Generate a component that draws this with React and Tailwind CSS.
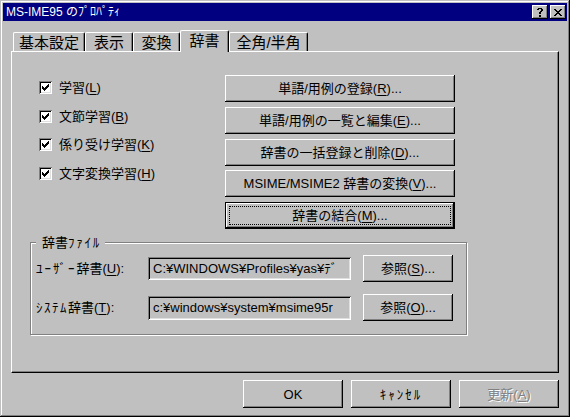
import React from "react";

const RAISED =
  "shadow-[inset_-1px_-1px_#000,inset_1px_1px_#fff,inset_-2px_-2px_#808080]";
const SUNKEN =
  "shadow-[inset_1px_1px_#808080,inset_-1px_-1px_#fff,inset_2px_2px_#000,inset_-2px_-2px_#dfdfdf]";

function U({ children }) {
  return <span className="underline underline-offset-[2px]">{children}</span>;
}

function Check() {
  return (
    <div className={`w-[13px] h-[13px] bg-white flex items-center justify-center shrink-0 ${SUNKEN}`}>
      <svg width="7" height="7" viewBox="0 0 7 7" shapeRendering="crispEdges">
        {[2, 3, 4, 3, 2, 1, 0].map((y, x) => (
          <rect key={x} x={x} y={y} width="1" height="3" fill="#000" />
        ))}
      </svg>
    </div>
  );
}

function CloseGlyph() {
  const rows = [
    [0, 1, 6, 7],
    [1, 2, 5, 6],
    [2, 3, 4, 5],
    [3, 4],
    [2, 3, 4, 5],
    [1, 2, 5, 6],
    [0, 1, 6, 7],
  ];
  return (
    <svg width="8" height="7" viewBox="0 0 8 7" shapeRendering="crispEdges">
      {rows.map((r, y) =>
        r.map((x) => <rect key={`${x}-${y}`} x={x} y={y} width="1" height="1" fill="#000" />)
      )}
    </svg>
  );
}

function HelpGlyph() {
  const rows = [
    [1, 2, 3, 4],
    [0, 1, 4, 5],
    [4, 5],
    [3, 4],
    [2, 3],
    [2, 3],
    [],
    [2, 3],
    [2, 3],
  ];
  return (
    <svg width="6" height="9" viewBox="0 0 6 9" shapeRendering="crispEdges">
      {rows.map((r, y) =>
        r.map((x) => <rect key={`${x}-${y}`} x={x} y={y} width="1" height="1" fill="#000" />)
      )}
    </svg>
  );
}

function TitleButton({ children }) {
  return (
    <div className={`w-[16px] h-[14px] bg-[#c0c0c0] flex items-center justify-center ${RAISED}`}>
      {children}
    </div>
  );
}

function Tab({ label, w, selected }) {
  if (selected) {
    return (
      <div
        className={`relative z-10 -mb-[1px] h-[22px] ${w} bg-[#c0c0c0] border-t border-l border-white border-r border-r-black rounded-tl-[2px] rounded-tr-[2px] shadow-[inset_-1px_0_#808080] flex items-start justify-center pt-[1px] text-[15px] leading-[17px]`}
      >
        {label}
      </div>
    );
  }
  return (
    <div
      className={`h-[19px] ${w} bg-[#c0c0c0] border-t border-l border-white border-r border-r-black rounded-tl-[2px] rounded-tr-[2px] shadow-[inset_-1px_0_#808080] flex items-start justify-center pt-[1px] text-[15px] leading-[17px]`}
    >
      {label}
    </div>
  );
}

function CheckRow({ children }) {
  return (
    <div className="flex items-center h-[13px] gap-[7px] text-[13px] leading-[15px] whitespace-nowrap">
      <Check />
      <span>{children}</span>
    </div>
  );
}

function Btn({ children, className = "" }) {
  return (
    <div
      className={`bg-[#c0c0c0] flex items-center justify-center text-[13px] leading-[15px] whitespace-nowrap ${RAISED} ${className}`}
    >
      {children}
    </div>
  );
}

function FocusBtn({ children }) {
  return (
    <div className="relative h-[27px] bg-[#c0c0c0] flex items-center justify-center text-[13px] leading-[15px] whitespace-nowrap shadow-[inset_-1px_-1px_#000,inset_1px_1px_#000,inset_-2px_-2px_#000,inset_2px_2px_#fff,inset_-3px_-3px_#808080]">
      <div className="absolute inset-[4px] border border-dotted border-black" />
      {children}
    </div>
  );
}

function FileRow({ label, value, btn, inputH }) {
  return (
    <div className="flex items-center h-[27px]">
      <div className="w-[112px] text-[13px] leading-[15px] whitespace-nowrap">{label}</div>
      <div
        className={`w-[203px] ${inputH} bg-[#c0c0c0] flex items-center px-[5px] overflow-hidden whitespace-nowrap text-[13px] leading-[15px] ${SUNKEN}`}
      >
        {value}
      </div>
      <Btn className="ml-[12px] w-[90px] h-[27px]">{btn}</Btn>
    </div>
  );
}

export default function App() {
  return (
    <div className="w-[570px] h-[417px] bg-[#c0c0c0] p-[3px] flex flex-col text-black font-['Liberation_Sans','Noto_Sans_CJK_JP',sans-serif] shadow-[inset_-1px_-1px_#000,inset_1px_1px_#c0c0c0,inset_-2px_-2px_#808080,inset_2px_2px_#fff]">
      {/* Title bar */}
      <div className="h-[18px] bg-[#000080] flex items-center pl-[3px] pr-[1px]">
        <div className="flex-1 text-white text-[12px] leading-[14px] whitespace-nowrap">
          MS-IME95 のﾌﾟﾛﾊﾟﾃｨ
        </div>
        <div className="flex gap-[2px]">
          <TitleButton>
            <HelpGlyph />
          </TitleButton>
          <TitleButton>
            <CloseGlyph />
          </TitleButton>
        </div>
      </div>

      {/* Tabs */}
      <div className="ml-[10px] mt-[9px] h-[21px] flex items-end">
        <Tab label="基本設定" w="w-[72px]" />
        <Tab label="表示" w="w-[48px]" />
        <Tab label="変換" w="w-[47px]" />
        <Tab label="辞書" w="w-[49px]" selected />
        <Tab label="全角/半角" w="w-[79px]" />
      </div>

      {/* Panel */}
      <div className="ml-[8px] w-[548px] h-[322px] border-t border-l border-white border-r border-b border-r-black border-b-black shadow-[inset_-1px_-1px_#808080] pt-[23px] pl-[18px] flex flex-col">
        <div className="flex">
          <div className="w-[195px] pl-[9px] pt-[6px] flex flex-col gap-[15.5px]">
            <CheckRow>
              学習(<U>L</U>)
            </CheckRow>
            <CheckRow>
              文節学習(<U>B</U>)
            </CheckRow>
            <CheckRow>
              係り受け学習(<U>K</U>)
            </CheckRow>
            <CheckRow>
              文字変換学習(<U>H</U>)
            </CheckRow>
          </div>
          <div className="w-[230px] flex flex-col gap-[4.75px]">
            <Btn className="h-[27px]">
              単語/用例の登録(<U>R</U>)...
            </Btn>
            <Btn className="h-[27px]">
              単語/用例の一覧と編集(<U>E</U>)...
            </Btn>
            <Btn className="h-[27px]">
              辞書の一括登録と削除(<U>D</U>)...
            </Btn>
            <Btn className="h-[27px]">
              MSIME/MSIME2 辞書の変換(<U>V</U>)...
            </Btn>
            <FocusBtn>
              辞書の結合(<U>M</U>)...
            </FocusBtn>
          </div>
        </div>

        {/* Group box */}
        <div className="relative mt-[13px] w-[437px] h-[93px] border border-[#808080] shadow-[inset_1px_1px_#fff,1px_1px_#fff] pt-[12px] pl-[5px] flex flex-col gap-[12px]">
          <div className="absolute left-[5px] -top-[8px] bg-[#c0c0c0] pl-[6px] pr-[4px] text-[13px] leading-[15px]">
            辞書<span className="tracking-[1.75px]">ﾌｧｲﾙ</span>
          </div>
          <FileRow
            label={
              <>
                <span className="tracking-[2px]">ﾕｰｻﾞｰ</span>辞書(<U>U</U>):
              </>
            }
            value="C:¥WINDOWS¥Profiles¥yas¥ﾃﾞ"
            btn={<>参照(<U>S</U>)...</>}
            inputH="h-[23px]"
          />
          <FileRow
            label={
              <>
                <span className="tracking-[1.5px]">ｼｽﾃﾑ</span>辞書(<U>T</U>):
              </>
            }
            value="c:¥windows¥system¥msime95r"
            btn={<>参照(<U>O</U>)...</>}
            inputH="h-[24px]"
          />
        </div>
      </div>

      {/* Bottom buttons */}
      <div className="mt-[7px] mr-[8px] flex justify-end gap-[8px]">
        <Btn className="w-[100px] h-[28px]">OK</Btn>
        <Btn className="w-[100px] h-[28px]">
          <span className="tracking-[2px]">ｷｬﾝｾﾙ</span>
        </Btn>
        <Btn className="w-[100px] h-[28px] text-[#808080] [text-shadow:1px_1px_0_#fff]">
          更新(<U>A</U>)
        </Btn>
      </div>
    </div>
  );
}
